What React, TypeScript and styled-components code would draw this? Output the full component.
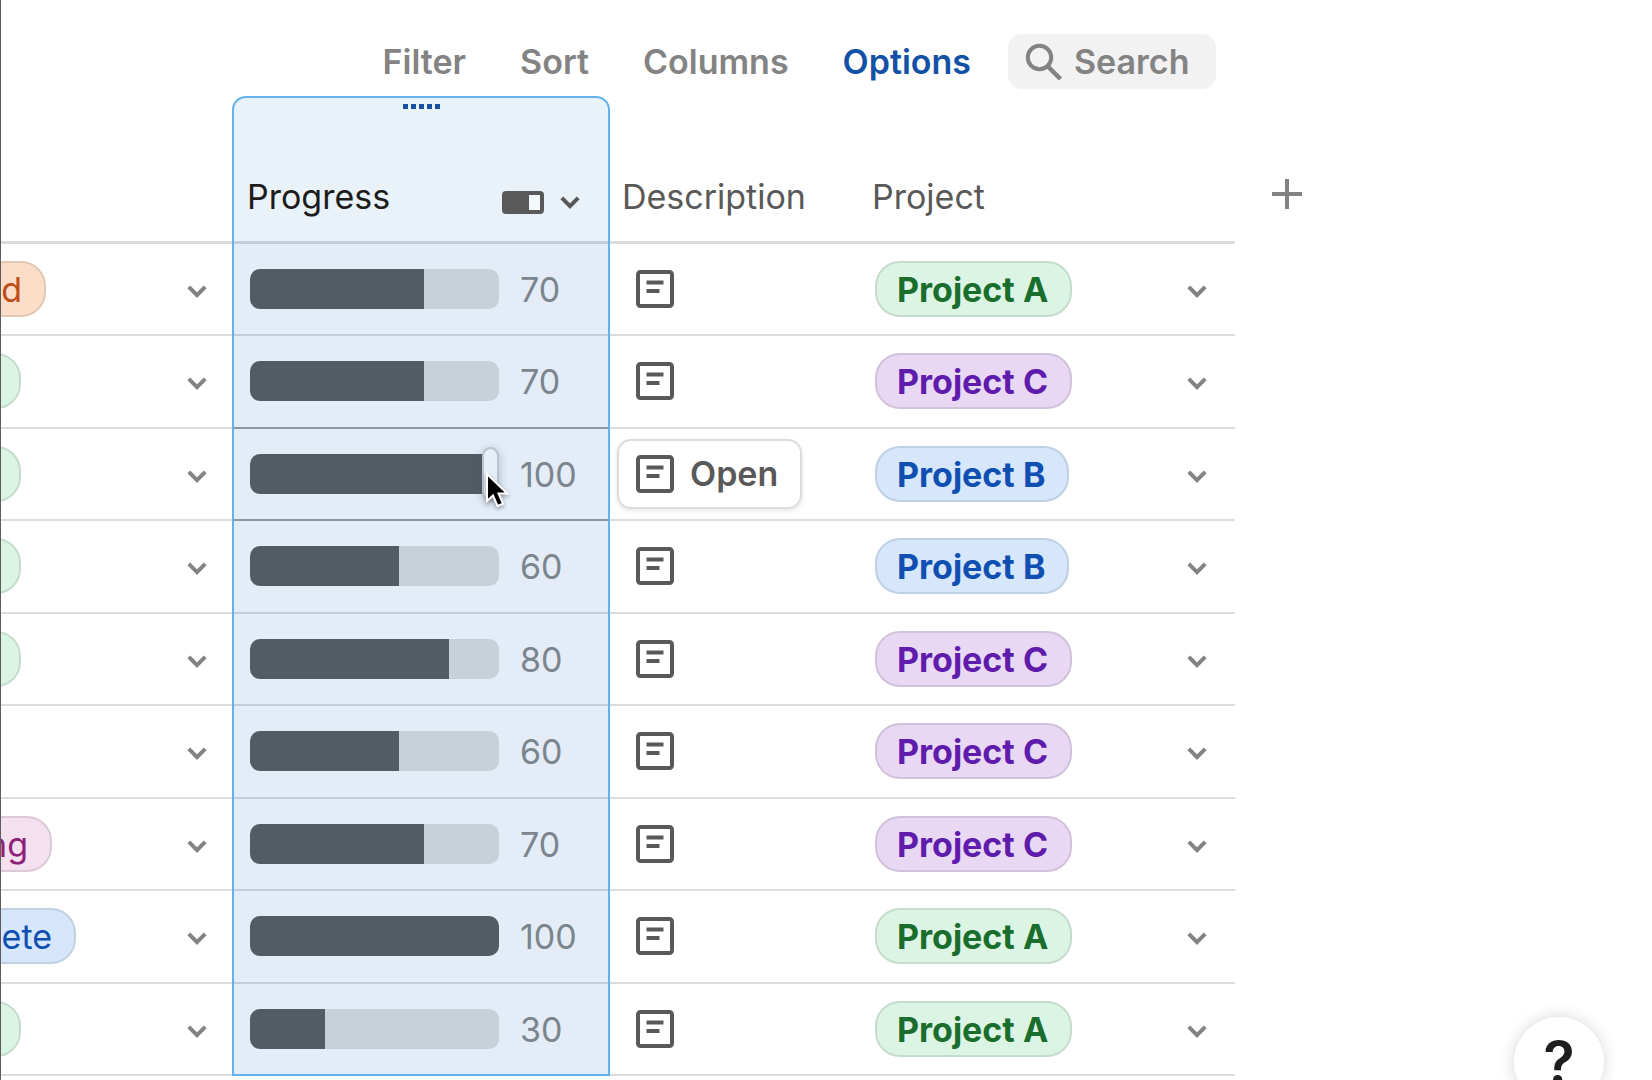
import React from "react";
import styled, { createGlobalStyle, css } from "styled-components";

const GlobalStyle = createGlobalStyle`
  *, *::before, *::after { box-sizing: border-box; }
  html, body { margin: 0; background: #fff; }
  body { overflow: hidden; }
  body, button, input { font-family: Inter, "Liberation Sans", sans-serif; font-size: 34px; line-height: 40px; }
  button { margin: 0; padding: 0; border: 0; background: none; color: inherit; cursor: pointer; }
`;

const LINE = "#dcdcdc";
const LINE_TINTED = "#c3ccda";
const LINE_ACTIVE = "#8c979f";
const BLUE = "#62b3ec";

type Tone = "green" | "purple" | "blue" | "orange" | "pink";

const tones: Record<Tone, { bg: string; line: string; text: string }> = {
  green: { bg: "#dcf4e3", line: "#c5dccd", text: "#196d2d" },
  purple: { bg: "#e8d8f3", line: "#d1c2dc", text: "#5f1bab" },
  blue: { bg: "#d6e6fb", line: "#c0d0e3", text: "#104fb2" },
  orange: { bg: "#fcddc8", line: "#e3c7b5", text: "#bf4d18" },
  pink: { bg: "#f4e0ef", line: "#dccad7", text: "#8f2079" },
};

const Page = styled.main`
  min-height: 100vh;
  border-left: 1px solid #5c5c5c;
`;

const Toolbar = styled.div`
  display: flex;
  justify-content: flex-end;
  align-items: center;
  gap: 54px;
  max-width: 1215px;
  padding: 34px 0 7px;
`;

const ToolButton = styled.button<{ $active?: boolean }>`
  font-weight: 600;
  color: ${(p) => (p.$active ? "#1251a5" : "#838383")};
`;

const SearchBox = styled.label`
  display: flex;
  align-items: center;
  gap: 10px;
  width: 208px;
  height: 55px;
  margin-left: -17px;
  padding: 0 16px;
  border-radius: 14px;
  background: #f2f2f2;
  color: #838383;
`;

const SearchInput = styled.input`
  flex: 1;
  min-width: 0;
  padding: 0;
  border: 0;
  outline: 0;
  background: none;
  font-weight: 600;
  &::placeholder { color: #838383; opacity: 1; }
`;

const Icon = styled.svg`
  display: block;
  flex: none;
  fill: none;
  stroke: currentColor;
`;

const Table = styled.table`
  width: 1340px;
  table-layout: fixed;
  border-collapse: separate;
  border-spacing: 0;
`;

const Col = styled.col<{ $w: number }>`
  width: ${(p) => p.$w}px;
`;

const HeadCell = styled.th`
  height: 148px;
  padding: 0 0 27px 12px;
  vertical-align: bottom;
  text-align: left;
  font-weight: 400;
  color: #595959;
  box-shadow: inset 0 -3px ${LINE};
`;

const ProgressHead = styled(HeadCell)`
  padding: 0 28px 27px 13px;
  border: 2px solid ${BLUE};
  border-bottom: 0;
  border-radius: 14px 14px 0 0;
  background: #e9f2f8;
  color: #1c1c1c;
  box-shadow: inset 0 -3px ${LINE_TINTED};
`;

const HeadStack = styled.div`
  display: flex;
  flex-direction: column;
  justify-content: space-between;
  height: 119px;
  padding-top: 6px;
`;

const Handle = styled.button`
  display: flex;
  align-self: center;
  gap: 3px;
  margin-left: 15px;
`;

const Dot = styled.span`
  width: 5px;
  height: 5px;
  background: #1a52a0;
`;

const HeadLine = styled.div`
  display: flex;
  align-items: center;
`;

const HeadTitle = styled.span`
  flex: 1;
`;

const HeadTools = styled.button`
  display: flex;
  align-items: center;
  gap: 16px;
  padding-top: 10px;
  color: #595959;
`;

const AddCell = styled.th`
  padding: 0 37px 35px;
  vertical-align: bottom;
`;

const AddButton = styled.button`
  display: block;
  color: #838383;
`;

const Cell = styled.td`
  padding: 0 0 2px;
  vertical-align: middle;
  box-shadow: inset 0 -2px ${LINE};
`;

const Row = styled.tr`
  height: 92px;
  &:nth-child(even) { height: 93px; }
  &:nth-child(even) > td { padding-bottom: 3px; }
`;

const ProgressCell = styled(Cell)<{ $line: string }>`
  position: relative;
  padding: 0 0 2px 16px;
  border: solid ${BLUE};
  border-width: 0 2px;
  background: #e4ecf7;
  box-shadow: inset 0 -2px ${(p) => p.$line};
`;

const Flex = styled.div<{ $right?: number }>`
  display: flex;
  align-items: center;
  justify-content: space-between;
  padding-right: ${(p) => p.$right ?? 0}px;
`;

const DocCell = styled(Cell)`
  padding-left: 7px;
`;

const ProjectCell = styled(Cell)`
  padding-left: 15px;
`;

const Pill = styled.span<{ $tone: Tone; $strong?: boolean }>`
  display: flex;
  flex: none;
  align-items: center;
  min-width: 60px;
  height: 56px;
  padding: 2px 22px 0 20px;
  border: 2px solid ${(p) => tones[p.$tone].line};
  border-radius: 25px;
  background: ${(p) => tones[p.$tone].bg};
  color: ${(p) => tones[p.$tone].text};
  font-weight: ${(p) => (p.$strong ? 700 : 400)};
`;

const Clip = styled.div<{ $w: number }>`
  display: flex;
  justify-content: flex-end;
  width: ${(p) => p.$w}px;
  height: 56px;
  overflow: hidden;
`;

const MenuButton = styled.button`
  display: block;
  margin-left: auto;
  padding-top: 5px;
  color: #838383;
`;

const Meter = styled.div`
  display: flex;
  align-items: center;
  gap: 21px;
`;

const activeThumb = css`
  width: 17px;
  height: 54px;
  margin-top: -7px;
  border: 2px solid #b9c3cc;
  border-radius: 9px;
  background: #e6eef8;
  box-shadow: 0 2px 10px rgba(70, 90, 105, 0.35);
`;

const Slider = styled.input<{ $active: boolean }>`
  appearance: none;
  width: 249px;
  height: 40px;
  margin: 0;
  border-radius: 10px;
  background: linear-gradient(to right, #535b63 var(--fill), #c7d1d7 var(--fill));
  &::-webkit-slider-runnable-track { height: 40px; }
  &::-webkit-slider-thumb {
    appearance: none;
    width: 1px;
    height: 40px;
    ${(p) => p.$active && activeThumb}
  }
`;

const Value = styled.output`
  padding-top: 2px;
  color: #7a858d;
`;

const Pointer = styled(Icon)`
  position: absolute;
  left: 251px;
  top: 43px;
  pointer-events: none;
  filter: drop-shadow(0 2px 2px rgba(0, 0, 0, 0.35));
`;

const DocButton = styled.button<{ $open: boolean }>`
  display: flex;
  align-items: center;
  gap: 16px;
  height: 70px;
  padding: 0 22px 0 17px;
  border: 2px solid ${(p) => (p.$open ? "#dcdcdc" : "transparent")};
  border-radius: 14px;
  box-shadow: ${(p) => (p.$open ? "0 2px 5px rgba(0, 0, 0, 0.1)" : "none")};
  color: #595959;
  font-weight: 600;
`;

const HelpButton = styled.button`
  position: fixed;
  right: 48px;
  bottom: -27px;
  width: 90px;
  height: 90px;
  border-radius: 50%;
  background: #fff;
  color: #1e1e1e;
  font-size: 58px;
  font-weight: 600;
  line-height: 90px;
  box-shadow: 0 0 16px rgba(0, 0, 0, 0.16);
`;

const Chevron = () => (
  <Icon width="20" height="13" viewBox="0 0 20 13" strokeWidth="4" aria-hidden>
    <path d="M1.8 1.9 10 10.1l8.2-8.2" />
  </Icon>
);

const DocIcon = () => (
  <Icon width="38" height="38" viewBox="0 0 38 38" strokeWidth="4" aria-hidden>
    <rect x="2" y="2" width="34" height="34" rx="2.5" />
    <path d="M10.500 12.500h17M10.500 21h13" />
  </Icon>
);

interface Item {
  status?: { tone: Tone; text: string; w: number };
  progress: number;
  project: "A" | "B" | "C";
  active?: boolean;
}

const green = { tone: "green" as Tone, text: "", w: 20 };

const items: Item[] = [
  { status: { tone: "orange", text: "d", w: 45 }, progress: 70, project: "A" },
  { status: green, progress: 70, project: "C" },
  { status: green, progress: 100, project: "B", active: true },
  { status: green, progress: 60, project: "B" },
  { status: green, progress: 80, project: "C" },
  { progress: 60, project: "C" },
  { status: { tone: "pink", text: "ng", w: 51 }, progress: 70, project: "C" },
  { status: { tone: "blue", text: "ete", w: 75 }, progress: 100, project: "A" },
  { status: green, progress: 30, project: "A" },
];

const projectTone: Record<Item["project"], Tone> = { A: "green", B: "blue", C: "purple" };

function lineFor(index: number) {
  if (index === items.length - 1) return BLUE;
  if (items[index].active || items[index + 1].active) return LINE_ACTIVE;
  return LINE_TINTED;
}

function ItemRow({ item, index }: { item: Item; index: number }) {
  const [value, setValue] = React.useState(item.progress);
  return (
    <Row>
      <Cell>
        <Flex $right={25}>
          {item.status && (
            <Clip $w={item.status.w}>
              <Pill $tone={item.status.tone}>{item.status.text}</Pill>
            </Clip>
          )}
          <MenuButton aria-label="Change status"><Chevron /></MenuButton>
        </Flex>
      </Cell>
      <ProgressCell $line={lineFor(index)}>
        <Meter>
          <Slider
            type="range"
            aria-label="Progress"
            $active={!!item.active}
            value={value}
            onChange={(e) => setValue(Number(e.target.value))}
            style={{ "--fill": `${value}%` } as React.CSSProperties}
          />
          <Value>{value}</Value>
        </Meter>
        {item.active && (
          <Pointer width="26" height="38" viewBox="0 0 26 38" aria-hidden>
            <path d="M2 2v27l6-5.500 4.500 10.500 5.500-2.300-4.500-10.200h8.700z" fill="#000" stroke="#fff" strokeWidth="2" />
          </Pointer>
        )}
      </ProgressCell>
      <DocCell>
        <DocButton $open={!!item.active} aria-label="Open description">
          <DocIcon />
          {item.active && "Open"}
        </DocButton>
      </DocCell>
      <ProjectCell>
        <Flex $right={28}>
          <Pill $tone={projectTone[item.project]} $strong>Project {item.project}</Pill>
          <MenuButton aria-label="Change project"><Chevron /></MenuButton>
        </Flex>
      </ProjectCell>
    </Row>
  );
}

export default function App() {
  return (
    <Page>
      <GlobalStyle />
      <Toolbar>
        <ToolButton>Filter</ToolButton>
        <ToolButton>Sort</ToolButton>
        <ToolButton>Columns</ToolButton>
        <ToolButton $active>Options</ToolButton>
        <SearchBox>
          <Icon width="40" height="40" viewBox="0 0 40 40" strokeWidth="4" aria-hidden>
            <circle cx="15.500" cy="15.500" r="11.700" />
            <path d="M24 24 25.500 26l11 11" strokeWidth="4.500" />
          </Icon>
          <SearchInput placeholder="Search" aria-label="Search" />
        </SearchBox>
      </Toolbar>
      <Table>
        <colgroup>
          <Col $w={231} />
          <Col $w={378} />
          <Col $w={250} />
          <Col $w={375} />
          <Col $w={106} />
        </colgroup>
        <thead>
          <tr>
            <HeadCell />
            <ProgressHead>
              <HeadStack>
                <Handle aria-label="Move column">
                  {[0, 1, 2, 3, 4].map((n) => <Dot key={n} />)}
                </Handle>
                <HeadLine>
                  <HeadTitle>Progress</HeadTitle>
                  <HeadTools aria-label="Column settings">
                    <Icon width="42" height="23" viewBox="0 0 42 23" aria-hidden>
                      <rect width="42" height="23" rx="4" fill="currentColor" stroke="none" />
                      <rect x="27" y="4" width="11" height="15" fill="#f4f9fc" stroke="none" />
                    </Icon>
                    <Chevron />
                  </HeadTools>
                </HeadLine>
              </HeadStack>
            </ProgressHead>
            <HeadCell>Description</HeadCell>
            <HeadCell>Project</HeadCell>
            <AddCell>
              <AddButton aria-label="Add column">
                <Icon width="30" height="30" viewBox="0 0 30 30" strokeWidth="4" aria-hidden>
                  <path d="M15 0v30M0 15h30" />
                </Icon>
              </AddButton>
            </AddCell>
          </tr>
        </thead>
        <tbody>
          {items.map((item, i) => <ItemRow key={i} item={item} index={i} />)}
        </tbody>
      </Table>
      <HelpButton aria-label="Help">?</HelpButton>
    </Page>
  );
}
